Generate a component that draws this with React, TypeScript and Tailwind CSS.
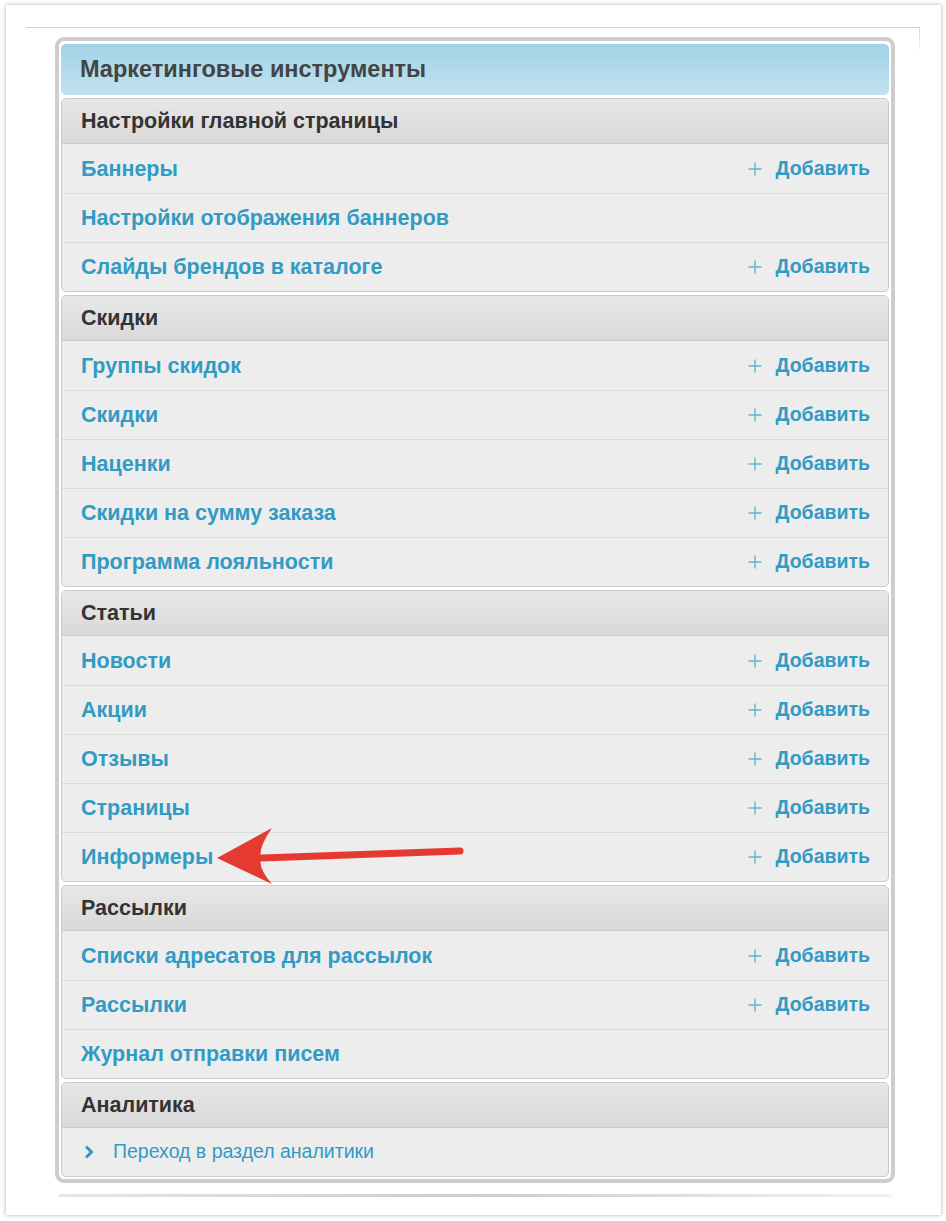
const sections: { title: string; rows: { label: string; add?: boolean }[] }[] = [
  {
    title: 'Настройки главной страницы',
    rows: [
      { label: 'Баннеры', add: true },
      { label: 'Настройки отображения баннеров' },
      { label: 'Слайды брендов в каталоге', add: true },
    ],
  },
  {
    title: 'Скидки',
    rows: [
      { label: 'Группы скидок', add: true },
      { label: 'Скидки', add: true },
      { label: 'Наценки', add: true },
      { label: 'Скидки на сумму заказа', add: true },
      { label: 'Программа лояльности', add: true },
    ],
  },
  {
    title: 'Статьи',
    rows: [
      { label: 'Новости', add: true },
      { label: 'Акции', add: true },
      { label: 'Отзывы', add: true },
      { label: 'Страницы', add: true },
      { label: 'Информеры', add: true },
    ],
  },
  {
    title: 'Рассылки',
    rows: [
      { label: 'Списки адресатов для рассылок', add: true },
      { label: 'Рассылки', add: true },
      { label: 'Журнал отправки писем' },
    ],
  },
];

function AddLink() {
  return (
    <div className="flex items-center gap-[14px]">
      <svg width="14" height="14" viewBox="0 0 14 14" className="text-[#5fb3d3]">
        <path d="M7 0.5v13M0.5 7h13" stroke="currentColor" strokeWidth="1.4" />
      </svg>
      <span className="text-[19.5px] font-bold text-[#319bc4]">Добавить</span>
    </div>
  );
}

function SectionHeader({ title }: { title: string }) {
  return (
    <div className="h-[45px] flex items-center pl-[19px] bg-gradient-to-b from-[#e7e7e7] to-[#d9d9d9] border-b border-[#cbcbcb]">
      <span className="text-[21.5px] font-bold text-[#333]">{title}</span>
    </div>
  );
}

export default function App() {
  return (
    <div className="relative w-[946px] h-[1221px] bg-white pt-[5px] pl-[6px] font-['Liberation_Sans']">
      <div className="w-[935px] h-[1210px] bg-white shadow-[0_0_4px_rgba(0,0,0,0.35)] pt-[22px]">
        {/* top rule of the page area */}
        <div className="relative ml-[20px] w-[894px] border-t border-[#d2d2d2]">
          <div className="absolute right-0 top-0 w-px h-[26px] bg-gradient-to-b from-[#d2d2d2] to-white" />
        </div>

        <div className="ml-[49px] mt-[9px] w-[840px] border-[4px] border-[#cdcdcd] rounded-[9px] p-[2px] pt-[3px] flex flex-col gap-[3px]">
          <div className="h-[51px] flex items-center pl-[19px] rounded-[5px] bg-gradient-to-b from-[#a1d3e6] to-[#c1e2ef]">
            <span className="text-[23.5px] font-bold text-[#444]">Маркетинговые инструменты</span>
          </div>

          {sections.map((s) => (
            <div key={s.title} className="border border-[#cbcbcb] rounded-[5px] overflow-hidden bg-[#ededed]">
              <SectionHeader title={s.title} />
              {s.rows.map((r, i) => (
                <div
                  key={r.label}
                  className={
                    'h-[49px] flex items-center justify-between pl-[19px] pr-[18px] ' +
                    (i > 0 ? 'border-t border-[#dadada]' : 'pt-px')
                  }
                >
                  <span className="text-[21.5px] font-bold text-[#319bc4]">{r.label}</span>
                  {r.add && <AddLink />}
                </div>
              ))}
            </div>
          ))}

          <div className="border border-[#cbcbcb] rounded-[5px] overflow-hidden bg-[#ededed]">
            <SectionHeader title="Аналитика" />
            <div className="h-[48px] flex items-center pl-[22px] gap-[19px]">
              <svg width="10" height="14" viewBox="0 0 10 14" className="text-[#2f9bc4]">
                <path d="M2 1.5l5.5 5.5L2 12.5" fill="none" stroke="currentColor" strokeWidth="3" />
              </svg>
              <span className="text-[19.5px] text-[#319bc4]">Переход в раздел аналитики</span>
            </div>
          </div>
        </div>

        <div className="ml-[52px] mt-[11px] w-[835px] h-[3px] rounded-t bg-gradient-to-r from-[#e6e6e6] via-[#cccccc] to-[#f2f2f2]" />
      </div>

      {/* red annotation arrow */}
      <svg className="absolute left-0 top-0 pointer-events-none" width="946" height="1221">
        <path d="M262 858 L460 851" stroke="#e53a2f" strokeWidth="7" strokeLinecap="round" />
        <path d="M217 858 L272 828 Q258 848 261 858 Q258 868 272 884 Z" fill="#e53a2f" />
      </svg>
    </div>
  );
}
